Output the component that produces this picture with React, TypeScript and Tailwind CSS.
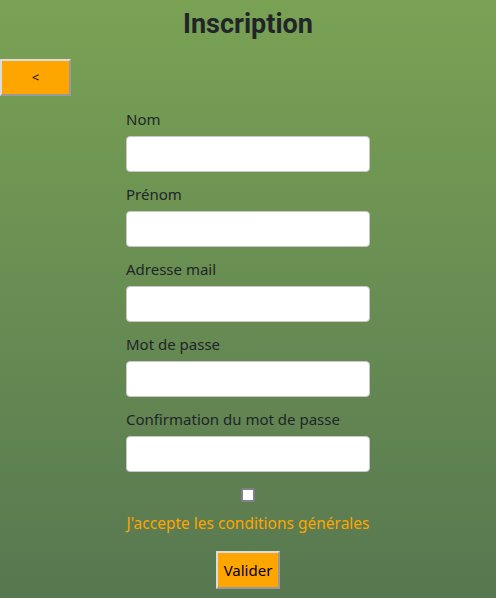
import React from "react";

const fields = [
  "Nom",
  "Prénom",
  "Adresse mail",
  "Mot de passe",
  "Confirmation du mot de passe",
];

export default function App() {
  return (
    <div className="w-full min-h-screen h-[598px] bg-gradient-to-b from-[#7aa254] to-[#577850] pt-[8px] font-['Noto_Sans',sans-serif]">
      <h1 className="text-center text-[27px] leading-[33px] font-bold text-[#212529] font-['Roboto',sans-serif]">
        Inscription
      </h1>
      <button
        type="button"
        className="mt-[18px] block w-[71px] h-[37px] bg-[#ffa500] border-2 border-solid border-t-[#dcdcdc] border-l-[#dcdcdc] border-r-[#9a9a9a] border-b-[#9a9a9a] text-[13px] text-black"
      >
        &lt;
      </button>
      <form className="mt-[12px] w-[244px] mx-auto flex flex-col">
        {fields.map((f) => (
          <div key={f} className="flex flex-col mb-[11px]">
            <label className="text-[15px] leading-[23px] text-[#212529] mb-[5px]">{f}</label>
            <input
              type={f.startsWith("Mot") || f.startsWith("Conf") ? "password" : "text"}
              className="h-[36px] w-[244px] bg-white rounded-[4px] border border-solid border-[#c8c8c8]"
            />
          </div>
        ))}
        <input
          type="checkbox"
          className="appearance-none block mx-auto mt-[5px] w-[14px] h-[14px] bg-white border-2 border-solid border-[#80808a] rounded-[2px]"
        />
        <p className="mt-[10px] text-center text-[15.5px] leading-[23px] text-[#ffa500] whitespace-nowrap">
          J'accepte les conditions générales
        </p>
        <button
          type="button"
          className="mt-[16px] mx-auto block w-[64px] h-[38px] bg-[#ffa500] border-2 border-solid border-t-[#dcdcdc] border-l-[#dcdcdc] border-r-[#9a9a9a] border-b-[#9a9a9a] text-[15px] text-black"
        >
          Valider
        </button>
      </form>
    </div>
  );
}
